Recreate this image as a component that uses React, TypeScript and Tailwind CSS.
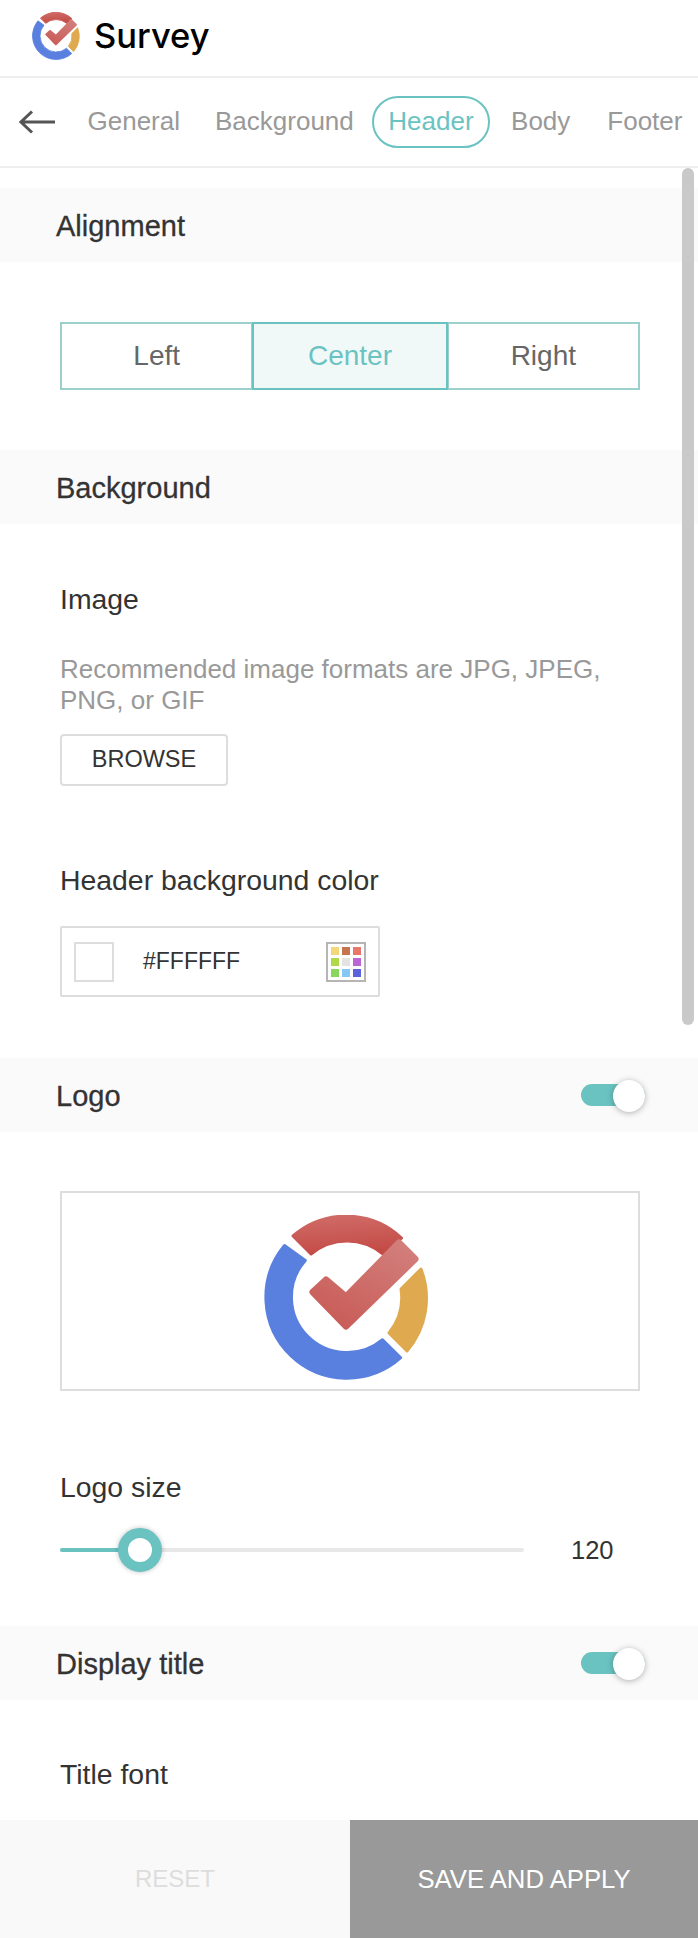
import { useState } from 'react'

const sans = 'font-["Liberation_Sans",Arial,sans-serif]'

function LogoMark({ size }: { size: number }) {
  return (
    <svg width={size} height={size} viewBox="0 0 165 165" className="shrink-0">
      <defs>
        <linearGradient id="checkFill" x1="0.9" y1="0" x2="0.3" y2="1">
          <stop offset="0" stopColor="#D27F7C" />
          <stop offset="1" stopColor="#C95D59" />
        </linearGradient>
        <linearGradient id="ringTop" x1="0" y1="0" x2="0.2" y2="1">
          <stop offset="0" stopColor="#D06C68" />
          <stop offset="1" stopColor="#C44C47" />
        </linearGradient>
      </defs>
      <g strokeLinejoin="round" strokeWidth="3">
        <path
          d="M20.5 30.5 A81 81 0 0 0 136.7 142.7 L118.5 124.7 A55.5 55.5 0 0 1 41.3 45.4 Z"
          fill="#5A80DF"
          stroke="#5A80DF"
        />
        <path
          d="M29 21 A81 81 0 0 1 137.5 23 L119 39 A56 56 0 0 0 47 39 Z"
          fill="url(#ringTop)"
          stroke="url(#ringTop)"
        />
        <path
          d="M157 54 A81 81 0 0 1 143 136 L125 118 A56 56 0 0 0 137 74 Z"
          fill="#DFA94F"
          stroke="#DFA94F"
        />
      </g>
      <path
        d="M135 28 L151 44 L82 111 L49 77 L62 65 L82 82 Z"
        fill="url(#checkFill)"
        stroke="url(#checkFill)"
        strokeWidth="7"
        strokeLinejoin="round"
      />
    </svg>
  )
}

function SectionTitle({ title, toggled }: { title: string; toggled?: boolean }) {
  return (
    <div className="flex h-[74px] items-center justify-between bg-[#FAFAFA] pl-[56px] pr-[53px]">
      <span className="pt-[2px] text-[29px] leading-none text-[#333] [-webkit-text-stroke:0.3px_#333]">
        {title}
      </span>
      {toggled && <Toggle />}
    </div>
  )
}

function Toggle() {
  return (
    <div className="relative h-[22px] w-[64px] rounded-full bg-[#6AC3C1]">
      <div className="absolute right-0 top-[-4px] h-[32px] w-[32px] rounded-full bg-white shadow-[0_1px_6px_rgba(0,0,0,0.3)]" />
    </div>
  )
}

const swatches = [
  'bg-[#F3D77A]',
  'bg-[#C5744F]',
  'bg-[#E8776B]',
  'bg-[#AFD84A]',
  'bg-[#E3E3E3]',
  'bg-[#BC66D6]',
  'bg-[#88D75A]',
  'bg-[#85C7F5]',
  'bg-[#5A62E0]',
]

export default function App() {
  const [align] = useState('Center')

  return (
    <div className={`flex h-[1938px] w-[698px] flex-col overflow-hidden bg-white ${sans}`}>
      {/* Header */}
      <div className="flex h-[78px] shrink-0 items-center gap-[14px] border-b-2 border-[#EEE] pb-[4px] pl-[32px]">
        <LogoMark size={48} />
        <span className='font-["Inter",sans-serif] text-[34.5px] font-medium leading-none text-black'>
          Survey
        </span>
      </div>

      {/* Tabs */}
      <div className="flex h-[90px] shrink-0 items-center border-b-2 border-[#EEE] pb-[1px] pl-[19px] text-[26px]">
        <svg width="36" height="24" viewBox="0 0 36 24" className="mr-[15px] shrink-0">
          <path d="M36 12H2M13 1.5L2 12l11 10.5" fill="none" stroke="#555" strokeWidth="3" />
        </svg>
        <span className="px-[17.5px] text-[#999]">General</span>
        <span className="px-[17.5px] text-[#999]">Background</span>
        <span className="ml-[1px] mr-[4px] flex h-[52px] items-center rounded-full border-2 border-[#6AC3C1] px-[14px] text-[#6AC3C1]">
          Header
        </span>
        <span className="px-[17.5px] text-[#999]">Body</span>
        <span className="ml-[2px] px-[17.5px] text-[#999]">Footer</span>
      </div>

      {/* Settings */}
      <div className="relative min-h-0 flex-1 overflow-hidden pt-[20px]">
        <div className="absolute left-[682px] top-0 h-[857px] w-[12px] rounded-full bg-[#C9C9C9]" />

        <SectionTitle title="Alignment" />
        <div className="mx-[60px] mb-[60px] mt-[60px] flex h-[68px] w-[580px]">
          {['Left', 'Center', 'Right'].map((item) => (
            <div
              key={item}
              className={
                item === align
                  ? 'z-10 -mx-[1px] flex flex-[1_1_196px] items-center justify-center border-2 border-[#6AC3C1] bg-[#F1F9F8] text-[28px] text-[#6AC3C1]'
                  : 'flex flex-[1_1_194px] items-center justify-center border-2 border-[#9BD0CC] text-[28px] text-[#666]'
              }
            >
              {item}
            </div>
          ))}
        </div>

        <SectionTitle title="Background" />
        <div className="px-[60px]">
          <p className="mt-[59px] text-[28.4px] leading-[32px] text-[#333]">Image</p>
          <p className="mt-[39px] text-[26px] leading-[31px] text-[#999]">
            Recommended image formats are JPG, JPEG,
            <br />
            PNG, or GIF
          </p>
          <button className="mt-[18px] flex h-[52px] w-[168px] items-center justify-center rounded-[4px] border-2 border-[#DDD] text-[23.5px] text-[#333]">
            BROWSE
          </button>
          <p className="mt-[78px] text-[28.4px] leading-[32px] text-[#333]">
            Header background color
          </p>
          <div className="mt-[30px] flex h-[71px] w-[320px] items-center rounded-[2px] border-2 border-[#DDD] pl-[12px] pr-[12px]">
            <div className="h-[40px] w-[40px] border-2 border-[#DDD]" />
            <span className="ml-[29px] flex-1 text-[23px] text-[#333]">#FFFFFF</span>
            <div className="grid h-[40px] w-[40px] grid-cols-[8px_8px_8px] grid-rows-[8px_8px_8px] content-center justify-center gap-[3px] border-2 border-[#B5B5B5]">
              {swatches.map((swatch) => (
                <div key={swatch} className={swatch} />
              ))}
            </div>
          </div>
        </div>

        <div className="mt-[61px]">
          <SectionTitle title="Logo" toggled />
        </div>
        <div className="px-[60px]">
          <div className="mt-[59px] flex h-[200px] w-[580px] items-center justify-center border-2 border-[#DDD] pr-[7px] pt-[12px]">
            <LogoMark size={165} />
          </div>
          <p className="mt-[80px] text-[28.4px] leading-[32px] text-[#333]">Logo size</p>
          <div className="mt-[25px] flex h-[44px] items-center">
            <div className="relative h-[4px] w-[464px] rounded-full bg-[#E8E8E8]">
              <div className="h-full w-[80px] rounded-full bg-[#6AC3C1]" />
              <div className="absolute left-[58px] top-[-20px] h-[44px] w-[44px] rounded-full border-[10px] border-[#6AC3C1] bg-white shadow-[0_0_5px_rgba(0,0,0,0.25)]" />
            </div>
            <span className="ml-[47px] text-[25.5px] text-[#333]">120</span>
          </div>
        </div>

        <div className="mt-[54px]">
          <SectionTitle title="Display title" toggled />
        </div>
        <p className="mt-[58px] px-[60px] text-[28.4px] leading-[32px] text-[#333]">Title font</p>
      </div>

      {/* Footer */}
      <div className="flex h-[118px] shrink-0">
        <button className="flex w-[350px] items-center justify-center bg-[#F9F9F9] text-[24px] text-[#DDD]">
          RESET
        </button>
        <button className="flex flex-1 items-center justify-center bg-[#999] text-[25.7px] text-white">
          SAVE AND APPLY
        </button>
      </div>
    </div>
  )
}
